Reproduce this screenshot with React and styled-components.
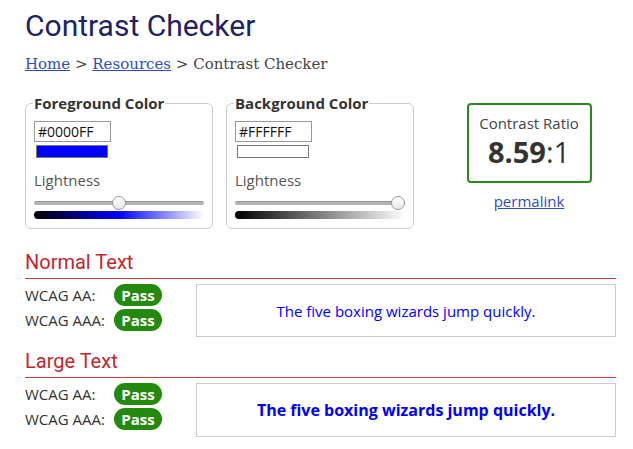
import styled, { createGlobalStyle } from "styled-components";

const GlobalStyle = createGlobalStyle`
  body {
    margin: 0;
    background: #fff;
    font-family: "Open Sans", "Liberation Sans", sans-serif;
    color: #333;
  }
`;

const Page = styled.div`
  padding: 8px 17px 0 25px;
`;

const Title = styled.h1`
  margin: 0;
  font-family: Roboto, "Liberation Sans", sans-serif;
  font-weight: 400;
  font-size: 30px;
  line-height: 36px;
  color: #1e2462;
`;

const Crumbs = styled.div`
  margin-top: 11px;
  font-family: "DejaVu Serif", "Liberation Serif", serif;
  font-size: 15px;
  line-height: 18px;
  color: #444;

  a {
    color: #2f4fb8;
    text-decoration: underline;
  }
`;

const TopRow = styled.div`
  display: flex;
  align-items: flex-start;
  margin-top: 22px;
  gap: 13px;
`;

const ColorSet = styled.fieldset`
  box-sizing: border-box;
  width: 188px;
  margin: 0;
  padding: 10px 8px 9px 8px;
  border: 1px solid #ccc;
  border-radius: 6px;

  legend {
    padding: 0 1px;
    margin-left: -1px;
    font-weight: 700;
    font-size: 15px;
    line-height: 16px;
    color: #333;
  }
`;

const HexInput = styled.input`
  box-sizing: border-box;
  display: block;
  width: 77px;
  height: 21px;
  margin: 0;
  padding: 0 3px;
  border: 1px solid #999;
  font-family: "Open Sans", sans-serif;
  font-size: 14px;
  color: #111;
  outline: none;
`;

const Swatch = styled.div`
  box-sizing: border-box;
  width: 72px;
  height: 13px;
  margin: 3px 0 0 2px;
  border: 1px solid #777;
  background: ${(p) => p.$color};
`;

const Label = styled.div`
  margin-top: 12px;
  font-size: 15px;
  line-height: 20px;
  color: #555;
`;

const Track = styled.div`
  position: relative;
  height: 4px;
  margin-top: 11px;
  border-radius: 2px;
  background: #b4b4b4;
  border-top: 1px solid #999;
  box-sizing: border-box;
`;

const Thumb = styled.div`
  position: absolute;
  top: -6px;
  width: 14px;
  height: 14px;
  margin-left: -7px;
  border-radius: 50%;
  box-sizing: border-box;
  border: 1px solid #999;
  background: linear-gradient(#fff, #e8e8e8);
`;

const Gradient = styled.div`
  height: 8px;
  margin-top: 6px;
  border-radius: 4px 0 0 4px;
  background: ${(p) => p.$stops};
`;

const RatioCol = styled.div`
  flex: 1;
  display: flex;
  flex-direction: column;
  align-items: center;
  padding-left: 15px;
`;

const RatioBox = styled.div`
  box-sizing: border-box;
  width: 125px;
  height: 80px;
  margin-top: 8px;
  border: 2px solid #2b8a1e;
  border-radius: 4px;
  text-align: center;
  padding-top: 8px;

  span.cap {
    display: block;
    font-size: 15px;
    line-height: 20px;
    color: #444;
  }

  span.num {
    display: block;
    margin-top: 1px;
    font-size: 29px;
    line-height: 36px;
    color: #333;
  }

  b {
    font-weight: 700;
  }
`;

const Permalink = styled.a`
  margin-top: 8px;
  font-size: 15px;
  color: #2f4fb8;
  text-decoration: underline;
`;

const SectionTitle = styled.h2`
  margin: ${(p) => p.$top}px 0 0;
  padding-bottom: 4px;
  border-bottom: 1px solid #cc3a3f;
  font-family: Roboto, "Liberation Sans", sans-serif;
  font-weight: 400;
  font-size: 20px;
  line-height: 24px;
  color: #c1272d;
`;

const Results = styled.div`
  display: flex;
  align-items: flex-start;
  margin-top: 5px;
`;

const Checks = styled.div`
  width: 171px;
  display: flex;
  flex-direction: column;
  gap: 3px;
`;

const CheckRow = styled.div`
  display: flex;
  align-items: center;
  height: 22px;
  font-size: 15px;
  color: #333;

  span {
    width: 89px;
  }
`;

const Badge = styled.div`
  width: 48px;
  height: 22px;
  border-radius: 11px;
  background: #238a0e;
  color: #fff;
  font-weight: 700;
  font-size: 15px;
  line-height: 22px;
  text-align: center;
`;

const Sample = styled.div`
  flex: 1;
  box-sizing: border-box;
  height: ${(p) => p.$h}px;
  border: 1px solid #ccc;
  display: flex;
  align-items: center;
  justify-content: center;
  color: #0000ff;
  font-size: ${(p) => (p.$large ? 16 : 15)}px;
  font-weight: ${(p) => (p.$large ? 700 : 400)};
`;

function ColorPanel({ title, hex, pos, stops }) {
  return (
    <ColorSet>
      <legend>{title}</legend>
      <HexInput defaultValue={hex} />
      <Swatch $color={hex} />
      <Label>Lightness</Label>
      <Track>
        <Thumb style={{ left: `${pos}%` }} />
      </Track>
      <Gradient $stops={stops} />
    </ColorSet>
  );
}

function ResultBlock({ title, top, large, h }) {
  return (
    <>
      <SectionTitle $top={top}>{title}</SectionTitle>
      <Results>
        <Checks>
          <CheckRow>
            <span>WCAG AA:</span>
            <Badge>Pass</Badge>
          </CheckRow>
          <CheckRow>
            <span>WCAG AAA:</span>
            <Badge>Pass</Badge>
          </CheckRow>
        </Checks>
        <Sample $large={large} $h={h}>
          The five boxing wizards jump quickly.
        </Sample>
      </Results>
    </>
  );
}

export default function App() {
  return (
    <>
      <GlobalStyle />
      <Page>
        <Title>Contrast Checker</Title>
        <Crumbs>
          <a href="#">Home</a> &gt; <a href="#">Resources</a> &gt; Contrast Checker
        </Crumbs>
        <TopRow>
          <ColorPanel
            title="Foreground Color"
            hex="#0000FF"
            pos={50}
            stops="linear-gradient(to right, #000 0%, #0000ff 50%, #ffffff 100%)"
          />
          <ColorPanel
            title="Background Color"
            hex="#FFFFFF"
            pos={96}
            stops="linear-gradient(to right, #000 0%, #ffffff 100%)"
          />
          <RatioCol>
            <RatioBox>
              <span className="cap">Contrast Ratio</span>
              <span className="num">
                <b>8.59</b>:1
              </span>
            </RatioBox>
            <Permalink href="#">permalink</Permalink>
          </RatioCol>
        </TopRow>
        <ResultBlock title="Normal Text" top={21} h={53} />
        <ResultBlock title="Large Text" top={12} large h={54} />
      </Page>
    </>
  );
}
